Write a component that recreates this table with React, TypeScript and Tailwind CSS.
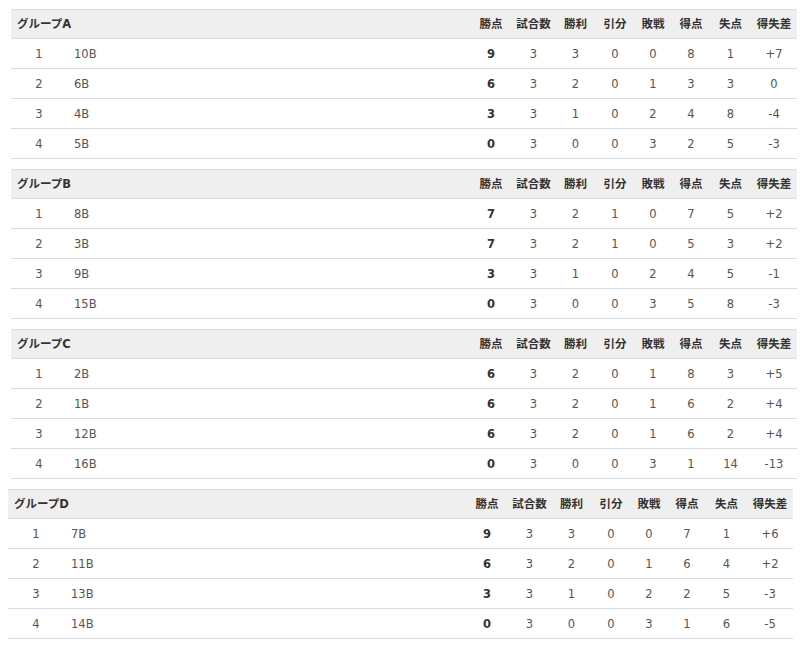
import React from "react";

type Row = [number, string, number, number, number, number, number, number, number, string];

const groups: { name: string; rows: Row[] }[] = [
  {
    name: "グループA",
    rows: [
      [1, "10B", 9, 3, 3, 0, 0, 8, 1, "+7"],
      [2, "6B", 6, 3, 2, 0, 1, 3, 3, "0"],
      [3, "4B", 3, 3, 1, 0, 2, 4, 8, "-4"],
      [4, "5B", 0, 3, 0, 0, 3, 2, 5, "-3"],
    ],
  },
  {
    name: "グループB",
    rows: [
      [1, "8B", 7, 3, 2, 1, 0, 7, 5, "+2"],
      [2, "3B", 7, 3, 2, 1, 0, 5, 3, "+2"],
      [3, "9B", 3, 3, 1, 0, 2, 4, 5, "-1"],
      [4, "15B", 0, 3, 0, 0, 3, 5, 8, "-3"],
    ],
  },
  {
    name: "グループC",
    rows: [
      [1, "2B", 6, 3, 2, 0, 1, 8, 3, "+5"],
      [2, "1B", 6, 3, 2, 0, 1, 6, 2, "+4"],
      [3, "12B", 6, 3, 2, 0, 1, 6, 2, "+4"],
      [4, "16B", 0, 3, 0, 0, 3, 1, 14, "-13"],
    ],
  },
  {
    name: "グループD",
    rows: [
      [1, "7B", 9, 3, 3, 0, 0, 7, 1, "+6"],
      [2, "11B", 6, 3, 2, 0, 1, 6, 4, "+2"],
      [3, "13B", 3, 3, 1, 0, 2, 2, 5, "-3"],
      [4, "14B", 0, 3, 0, 0, 3, 1, 6, "-5"],
    ],
  },
];

const heads = ["勝点", "試合数", "勝利", "引分", "敗戦", "得点", "失点", "得失差"];
const widths = ["w-[42px]", "w-[43px]", "w-[41px]", "w-[38px]", "w-[38px]", "w-[38px]", "w-[41px]", "w-[46px]"];

function GroupTable({ name, rows, last }: { name: string; rows: Row[]; last: boolean }) {
  return (
    <table
      className={
        "table-fixed border-separate border-spacing-0 text-[11.5px] " +
        (last ? "ml-[8px] w-[785px]" : "ml-[11px] w-[786px] mb-[10px]")
      }
    >
      <colgroup>
        <col className="w-[56px]" />
        <col />
        {widths.map((w, i) => (
          <col key={i} className={w} />
        ))}
      </colgroup>
      <thead>
        <tr className="bg-[#efefef] text-[#333]">
          <th
            colSpan={2}
            className="h-[30px] p-0 pt-[2px] text-left pl-[6px] font-bold border-t border-b border-[#dcdcdc]"
          >
            {name}
          </th>
          {heads.map((h) => (
            <th
              key={h}
              className="h-[30px] p-0 pt-[2px] text-center font-bold border-t border-b border-[#dcdcdc]"
            >
              {h}
            </th>
          ))}
        </tr>
      </thead>
      <tbody>
        {rows.map((r) => (
          <tr key={r[0]} className="text-[#555]">
            <td className="h-[30px] p-0 pt-[2px] text-center border-b border-[#dcdcdc]">{r[0]}</td>
            <td className="h-[30px] p-0 pt-[2px] pl-[7px] border-b border-[#dcdcdc]">{r[1]}</td>
            <td className="h-[30px] p-0 pt-[2px] text-center font-bold text-[#333] border-b border-[#dcdcdc]">
              {r[2]}
            </td>
            {r.slice(3).map((v, i) => (
              <td key={i} className="h-[30px] p-0 pt-[2px] text-center border-b border-[#dcdcdc]">
                {v}
              </td>
            ))}
          </tr>
        ))}
      </tbody>
    </table>
  );
}

export default function App() {
  return (
    <div
      className="bg-white w-[800px] h-[649px] pt-[9px]"
      style={{ fontFamily: '"DejaVu Sans", "Noto Sans CJK JP", sans-serif' }}
    >
      {groups.map((g, i) => (
        <GroupTable key={g.name} name={g.name} rows={g.rows} last={i === groups.length - 1} />
      ))}
    </div>
  );
}
